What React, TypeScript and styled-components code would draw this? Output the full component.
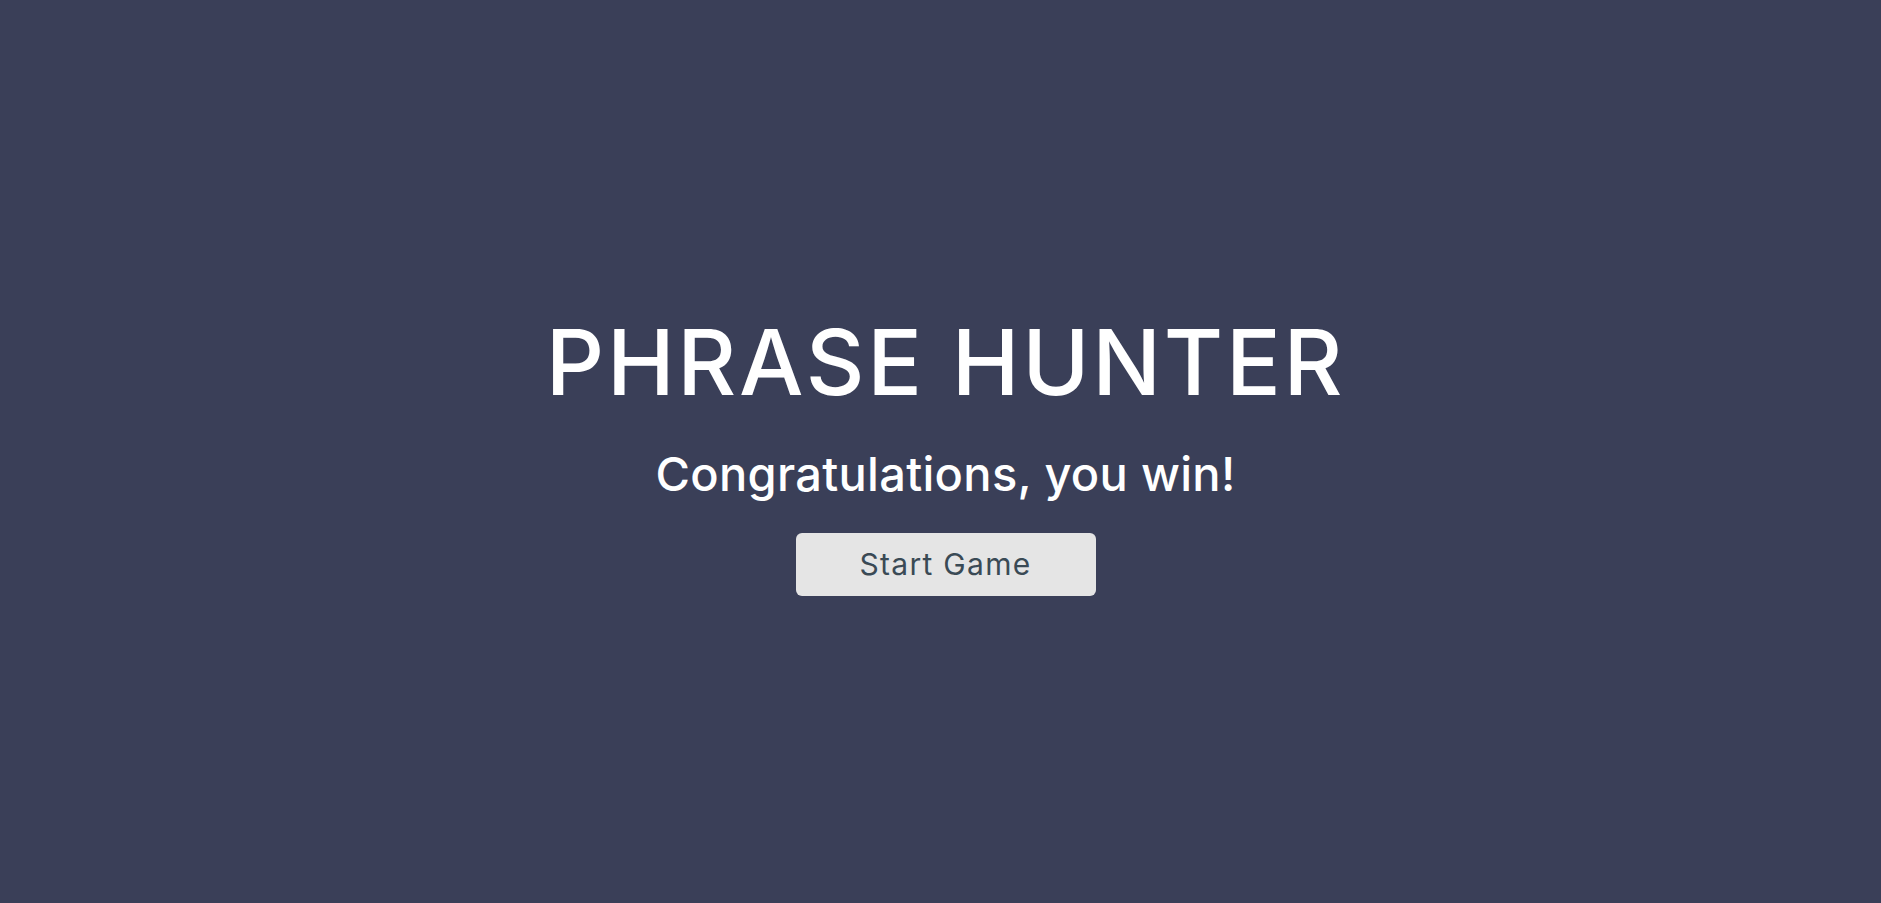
import React from "react";
import styled, { createGlobalStyle } from "styled-components";

const Global = createGlobalStyle`
  html, body { margin: 0; padding: 0; background: #3a3f58; }
  body { font-family: Inter, "Noto Sans", sans-serif; }
`;

const Overlay = styled.main`
  min-height: 100vh;
  display: flex;
  flex-direction: column;
  align-items: center;
  justify-content: center;
  background: #3a3f58;
  color: #fff;
  box-sizing: border-box;
  padding: 7px 0 0 10px;
`;

const Title = styled.h1`
  margin: 0;
  font-family: Inter, sans-serif;
  font-weight: 500;
  font-size: 91px;
  line-height: 1.06;
  letter-spacing: 2.7px;
`;

const Message = styled.h2`
  margin: 35px 0 0;
  font-family: Inter, sans-serif;
  font-weight: 500;
  font-size: 47px;
  line-height: 1.2;
  letter-spacing: 0.3px;
`;

const StartButton = styled.button`
  margin-top: 31px;
  width: 300px;
  height: 63px;
  border: none;
  border-radius: 6px;
  background: #e5e5e5;
  color: #3a4a55;
  font-family: Inter, sans-serif;
  font-size: 30px;
  font-weight: 400;
  letter-spacing: 1.3px;
  cursor: pointer;
`;

export default function App() {
  return (
    <>
      <Global />
      <Overlay>
        <Title>PHRASE HUNTER</Title>
        <Message>Congratulations, you win!</Message>
        <StartButton>Start Game</StartButton>
      </Overlay>
    </>
  );
}
